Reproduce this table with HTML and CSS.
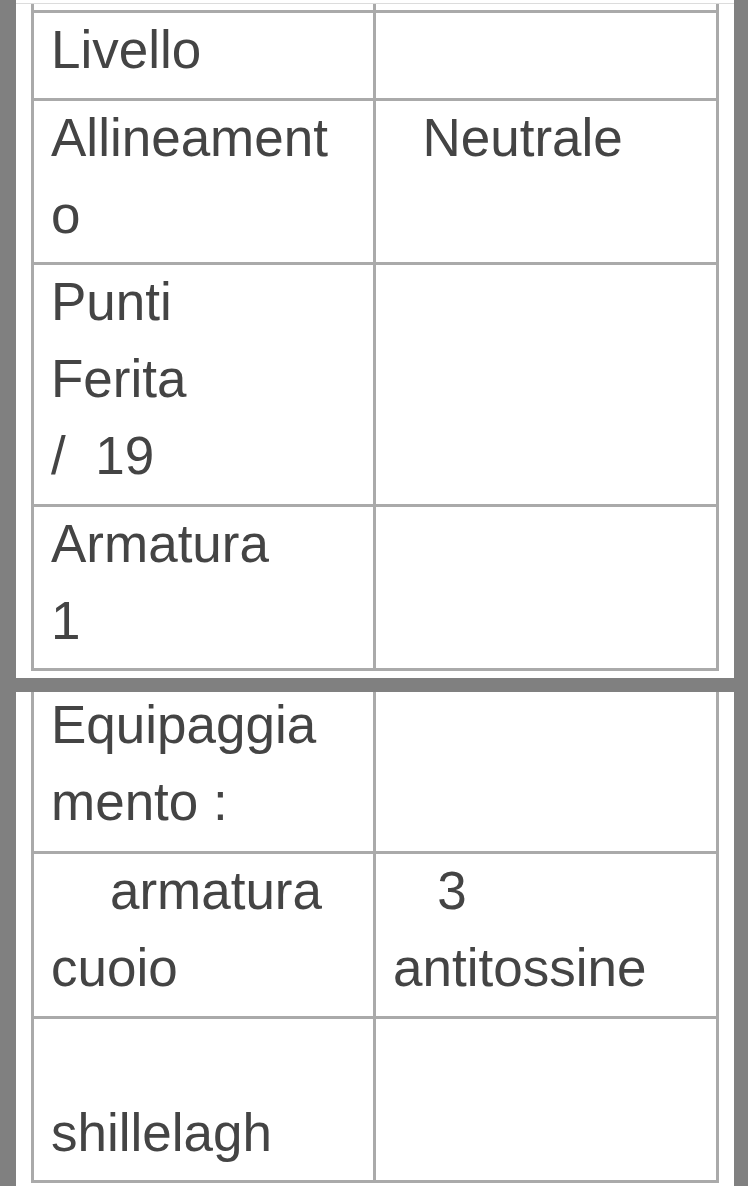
FILE: index.html
```html
<!DOCTYPE html>
<html lang="it">
<head>
<meta charset="utf-8">
<title>Scheda personaggio</title>
<link rel="stylesheet" href="styles.css">
</head>
<body>
<div class="page">
  <section class="panel panel-first">
    <div class="topline"></div>
    <table class="sheet">
      <colgroup><col class="ck"><col class="cv"></colgroup>
      <tr class="stub"><td></td><td class="v"></td></tr>
      <tr><td><div class="t">Livello</div></td><td class="v"></td></tr>
      <tr><td><div class="t">Allineament
o</div></td><td class="v"><div class="t">  Neutrale</div></td></tr>
      <tr><td><div class="t">Punti
Ferita
/  19</div></td><td class="v"></td></tr>
      <tr><td><div class="t">Armatura
1</div></td><td class="v"></td></tr>
    </table>
  </section>
  <section class="panel panel-second">
    <table class="sheet cut">
      <colgroup><col class="ck"><col class="cv"></colgroup>
      <tr><td><div class="t">Equipaggia
mento :</div></td><td class="v"></td></tr>
      <tr><td><div class="t">    armatura
cuoio</div></td><td class="v"><div class="t">   3
antitossine</div></td></tr>
      <tr><td><div class="t">&#10;shillelagh</div></td><td class="v"></td></tr>
    </table>
  </section>
</div>
</body>
</html>
```
FILE: styles.css
```css
html, body {
  margin: 0;
  background: #808080;
}
body {
  font-family: "Liberation Sans", Arial, sans-serif;
  color: #444444;
}
.page {
  display: flex;
  flex-direction: column;
  gap: 14px;
  padding: 0 14px 0 16px;
}
.panel {
  background: #ffffff;
  padding: 0 15px;
}
.panel-first {
  padding-bottom: 7px;
}
.panel-second {
  padding-bottom: 6px;
}
.topline {
  height: 3px;
  border-bottom: 1px solid #dcdcdc;
  margin: 0 -15px;
}
.sheet {
  width: 100%;
  border-collapse: separate;
  border-spacing: 0;
  table-layout: fixed;
}
.ck { width: 342px; }
.cv { width: 346px; }
.sheet td {
  border-left: 3px solid #aaaaaa;
  border-top: 3px solid #aaaaaa;
  padding: 0 12px 9.5px 17px;
  vertical-align: top;
  font-size: 53px;
  line-height: 77px;
  white-space: pre-wrap;
}
.sheet td.v {
  border-right: 3px solid #aaaaaa;
  padding-left: 17px;
}
.sheet tr:last-child td {
  border-bottom: 3px solid #aaaaaa;
}
.sheet .t {
  margin-top: -2px;
}
.sheet tr.stub td {
  border-top: none;
  height: 6px;
  padding: 0;
  font-size: 0;
  line-height: 0;
}
.sheet.cut tr:first-child td {
  border-top: none;
  padding-bottom: 11px;
}
.sheet.cut tr:first-child .t {
  margin-top: -6px;
}
```
